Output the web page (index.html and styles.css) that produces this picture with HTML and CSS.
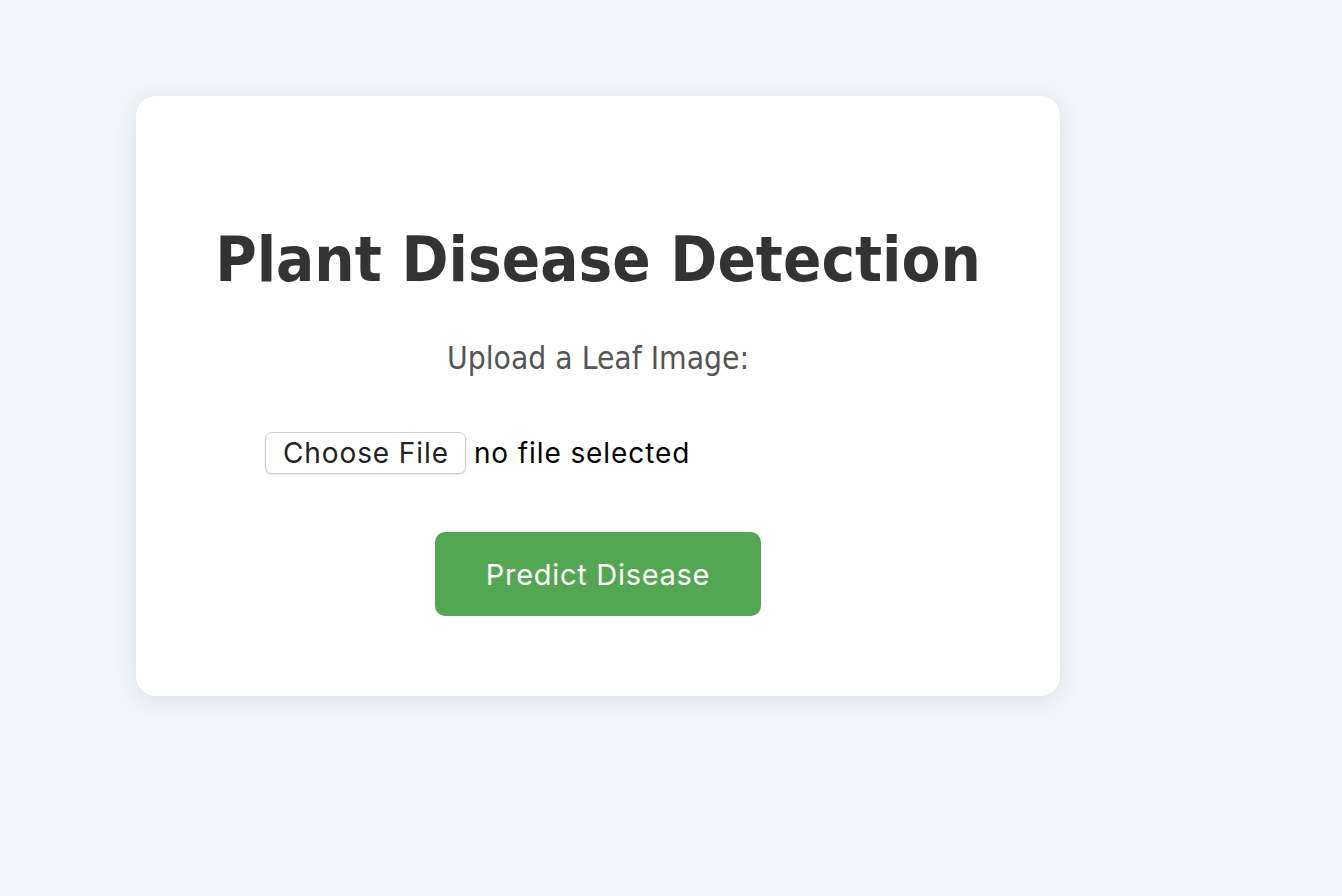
FILE: index.html
```html
<!DOCTYPE html>
<html lang="en">
<head>
<meta charset="utf-8">
<title>Plant Disease Detection</title>
<link rel="stylesheet" href="styles.css">
</head>
<body>
  <main class="card">
    <h1 class="title">Plant Disease Detection</h1>
    <form class="upload-form">
      <label class="upload-label" for="leaf">Upload a Leaf Image:</label>
      <div class="file-row">
        <label class="file-btn" for="leaf">Choose File</label>
        <span class="file-name">no file selected</span>
        <input class="file-input" type="file" id="leaf" accept="image/*">
      </div>
      <button class="predict-btn" type="submit">Predict Disease</button>
    </form>
  </main>
</body>
</html>
```

FILE: styles.css
```css
html, body {
  margin: 0;
  padding: 0;
}

body {
  background: #f2f5f9;
  min-height: 896px;
  font-family: "DejaVu Sans Condensed", "DejaVu Sans", sans-serif;
}

.card {
  box-sizing: border-box;
  width: 924px;
  height: 600px;
  margin: 96px 0 0 136px;
  background: #ffffff;
  border-radius: 20px;
  box-shadow: 0 4px 24px rgba(40, 50, 80, 0.10);
  display: flex;
  flex-direction: column;
  align-items: center;
  padding-top: 125px;
}

.title {
  margin: 0;
  font-size: 63px;
  line-height: 77px;
  font-weight: 700;
  color: #333333;
}

.upload-form {
  display: flex;
  flex-direction: column;
  align-items: center;
  margin-top: 43px;
}

.upload-label {
  font-size: 31.5px;
  line-height: 34px;
  color: #555555;
}

.file-row {
  display: flex;
  align-items: center;
  width: 666px;
  margin-top: 57px;
  font-family: Inter, "Liberation Sans", sans-serif;
}

.file-btn {
  box-sizing: border-box;
  height: 42px;
  display: flex;
  align-items: center;
  padding: 0 16px 0 17px;
  font-size: 28px;
  letter-spacing: 0.9px;
  color: #222222;
  background: #ffffff;
  border: 1px solid #d0d0d0;
  border-radius: 7px;
  box-shadow: 0 1px 2px rgba(0, 0, 0, 0.12);
}

.file-name {
  margin-left: 8px;
  font-size: 28px;
  letter-spacing: 0.9px;
  color: #000000;
}

.file-input {
  display: none;
}

.predict-btn {
  margin-top: 58px;
  width: 326px;
  height: 84px;
  border: none;
  border-radius: 10px;
  background: #54a752;
  color: #ffffff;
  font-family: Inter, "Liberation Sans", sans-serif;
  font-size: 29px;
  letter-spacing: 0.7px;
  cursor: pointer;
}
```
